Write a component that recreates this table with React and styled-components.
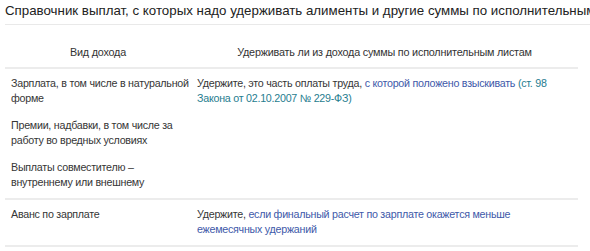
import React from "react"
import styled, { createGlobalStyle } from "styled-components"

const GlobalStyle = createGlobalStyle`
  body {
    margin: 0;
    background: #fff;
    font-family: "Liberation Sans", Arial, sans-serif;
    color: #333;
    overflow: hidden;
  }
`

const Page = styled.div`
  padding: 3px 12px 0 5px;
  width: 590px;
  box-sizing: border-box;
  overflow: hidden;
`

const Title = styled.h2`
  margin: 0 -20px 0 0;
  padding-bottom: 6px;
  font-size: 13.3px;
  line-height: 15px;
  font-weight: normal;
  color: #222;
  white-space: nowrap;
  border-bottom: 1.5px solid #e9e9e9;
`

const Table = styled.div`
  margin-top: 12px;
  display: grid;
  grid-template-columns: 186px 1fr;
  line-height: 15px;
`

const HeadCell = styled.div`
  padding: 8px 6px 7px;
  text-align: center;
  font-size: 10.8px;
  letter-spacing: -0.2px;
  color: #333;
  border-bottom: 2px solid #ececec;
`

const Cell = styled.div`
  padding: 7px 0 8px 6px;
  font-size: 10.7px;
  letter-spacing: -0.25px;
  border-bottom: 2px solid #ececec;
  color: #363636;
`

const Para = styled.p`
  margin: 0 0 12px;
  &:last-child {
    margin-bottom: 0;
  }
`

const Link = styled.a`
  color: ${p => (p.$law ? "#1f7d8f" : "#3e59a9")};
  text-decoration: none;
`

const rows = [
  {
    kind: [
      "Зарплата, в том числе в натуральной форме",
      "Премии, надбавки, в том числе за работу во вредных условиях",
      "Выплаты совместителю – внутреннему или внешнему",
    ],
    answer: (
      <>
        Удержите, это часть оплаты труда,{" "}
        <Link href="#">с которой положено взыскивать</Link>{" "}
        <Link href="#" $law>
          (ст. 98 Закона от 02.10.2007 № 229-ФЗ)
        </Link>
      </>
    ),
  },
  {
    kind: ["Аванс по зарплате"],
    answer: (
      <>
        Удержите,{" "}
        <Link href="#">
          если финальный расчет по зарплате окажется меньше ежемесячных
          удержаний
        </Link>
      </>
    ),
  },
]

export default function App() {
  return (
    <Page>
      <GlobalStyle />
      <Title>
        Справочник выплат, с которых надо удерживать алименты и другие суммы
        по исполнительным листам
      </Title>
      <Table>
        <HeadCell>Вид дохода</HeadCell>
        <HeadCell>Удерживать ли из дохода суммы по исполнительным листам</HeadCell>
        {rows.map((row, i) => (
          <React.Fragment key={i}>
            <Cell>
              {row.kind.map((t, j) => (
                <Para key={j}>{t}</Para>
              ))}
            </Cell>
            <Cell>{row.answer}</Cell>
          </React.Fragment>
        ))}
      </Table>
    </Page>
  )
}
